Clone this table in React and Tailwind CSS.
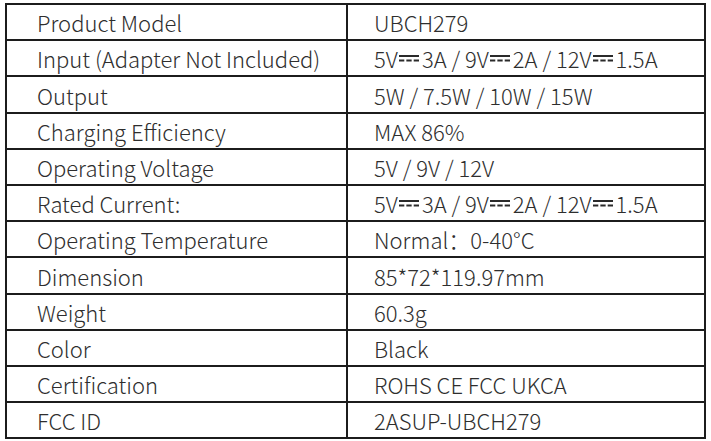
import React from "react";

const Dc = () => (
  <svg width="20" height="9" viewBox="0 0 20 9" className="inline-block ml-[1px] mr-[3px]" aria-hidden="true">
    <rect x="0" y="1" width="20" height="2" fill="#2a2a2a" />
    <rect x="0" y="5.5" width="5.3" height="2" fill="#2a2a2a" />
    <rect x="7.35" y="5.5" width="5.3" height="2" fill="#2a2a2a" />
    <rect x="14.7" y="5.5" width="5.3" height="2" fill="#2a2a2a" />
  </svg>
);

const Input = () => (
  <span className="inline-flex items-center">
    5V<Dc />3A / 9V<Dc />2A / 12V<Dc />1.5A
  </span>
);

const rows = [
  ["Product Model", "UBCH279", 34],
  ["Input (Adapter Not Included)", <Input />, 34],
  ["Output", "5W / 7.5W / 10W / 15W", 35],
  ["Charging Efficiency", "MAX 86%", 34],
  ["Operating Voltage", "5V / 9V / 12V", 34],
  ["Rated Current:", <Input />, 34],
  ["Operating Temperature", "Normal：0-40°C", 34],
  ["Dimension", "85*72*119.97mm", 35],
  ["Weight", "60.3g", 34],
  ["Color", "Black", 34],
  ["Certification", "ROHS CE FCC UKCA", 34],
  ["FCC ID", "2ASUP-UBCH279", 34],
];

export default function App() {
  return (
    <div
      className="w-[711px] h-[441px] bg-white pt-[3px] pl-[5px]"
      style={{ fontFamily: '"Noto Sans CJK SC", "Noto Sans", sans-serif' }}
    >
      <div className="w-[701px] border-2 border-[#1c1c1c] flex flex-col text-[22px] font-light text-[#2e2e2e] leading-none">
        {rows.map(([k, v, h], i) => (
          <div
            key={i}
            className={`flex ${i > 0 ? "border-t-2 border-[#1c1c1c]" : ""}`}
            style={{ height: h + (i > 0 ? 2 : 0) }}
          >
            <div className="w-[341px] border-r-2 border-[#1c1c1c] flex items-center pl-[30px]">{k}</div>
            <div className="flex-1 flex items-center pl-[26px]">{v}</div>
          </div>
        ))}
      </div>
    </div>
  );
}
